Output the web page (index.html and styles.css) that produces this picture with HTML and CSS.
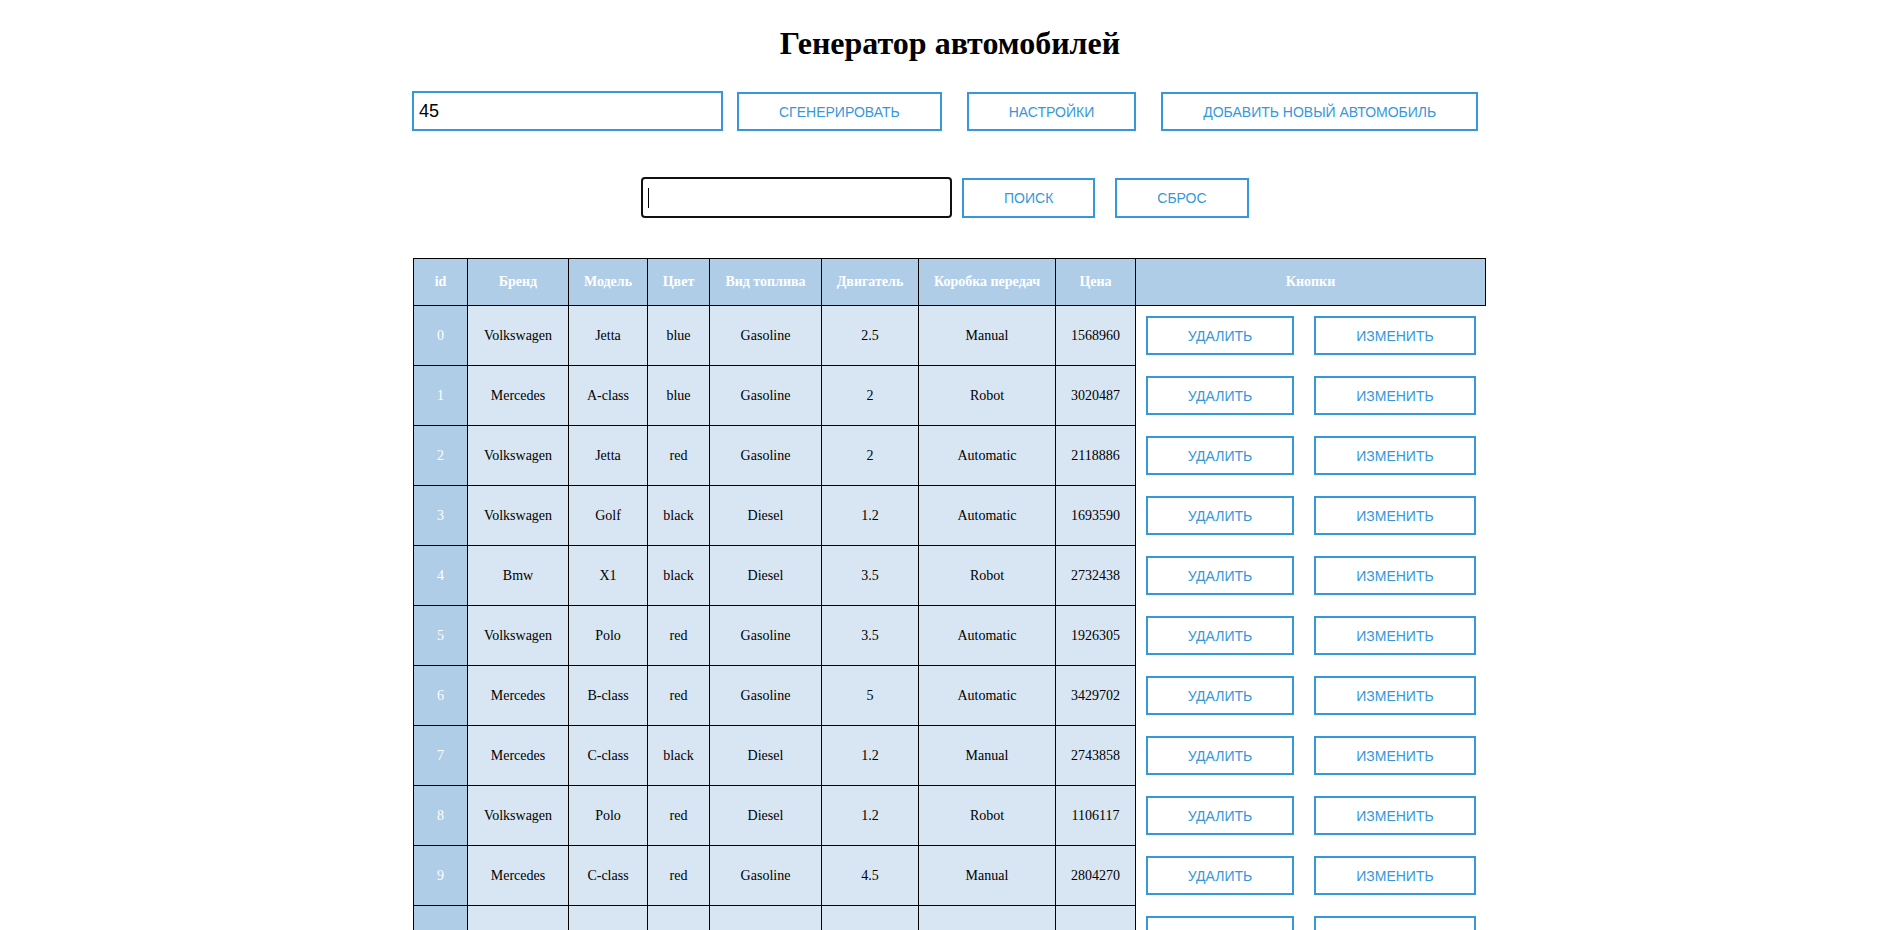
FILE: index.html
```html
<!DOCTYPE html>
<html lang="ru">
<head>
<meta charset="utf-8">
<title>Генератор автомобилей</title>
<link rel="stylesheet" href="styles.css">
</head>
<body>
<h1 class="title">Генератор автомобилей</h1>
<div class="bar bar-gen">
  <input class="field field-count" type="text" value="45">
  <button class="btn btn-first">Сгенерировать</button>
  <button class="btn">Настройки</button>
  <button class="btn">Добавить новый автомобиль</button>
</div>
<div class="bar bar-search">
  <input class="field field-search" type="text" value="">
  <button class="btn btn-first">Поиск</button>
  <button class="btn">Сброс</button>
</div>
<table class="cars">
  <colgroup>
    <col class="c-id"><col class="c-brand"><col class="c-model"><col class="c-color"><col class="c-fuel"><col class="c-engine"><col class="c-gear"><col class="c-price"><col class="c-btns">
  </colgroup>
  <thead>
    <tr><th>id</th><th>Бренд</th><th>Модель</th><th>Цвет</th><th>Вид топлива</th><th>Двигатель</th><th>Коробка передач</th><th>Цена</th><th>Кнопки</th></tr>
  </thead>
  <tbody>
    <tr><td class="id">0</td><td>Volkswagen</td><td>Jetta</td><td>blue</td><td>Gasoline</td><td>2.5</td><td>Manual</td><td>1568960</td><td class="actions"><div class="act"><button class="btn">Удалить</button><button class="btn">Изменить</button></div></td></tr>
    <tr><td class="id">1</td><td>Mercedes</td><td>A-class</td><td>blue</td><td>Gasoline</td><td>2</td><td>Robot</td><td>3020487</td><td class="actions"><div class="act"><button class="btn">Удалить</button><button class="btn">Изменить</button></div></td></tr>
    <tr><td class="id">2</td><td>Volkswagen</td><td>Jetta</td><td>red</td><td>Gasoline</td><td>2</td><td>Automatic</td><td>2118886</td><td class="actions"><div class="act"><button class="btn">Удалить</button><button class="btn">Изменить</button></div></td></tr>
    <tr><td class="id">3</td><td>Volkswagen</td><td>Golf</td><td>black</td><td>Diesel</td><td>1.2</td><td>Automatic</td><td>1693590</td><td class="actions"><div class="act"><button class="btn">Удалить</button><button class="btn">Изменить</button></div></td></tr>
    <tr><td class="id">4</td><td>Bmw</td><td>X1</td><td>black</td><td>Diesel</td><td>3.5</td><td>Robot</td><td>2732438</td><td class="actions"><div class="act"><button class="btn">Удалить</button><button class="btn">Изменить</button></div></td></tr>
    <tr><td class="id">5</td><td>Volkswagen</td><td>Polo</td><td>red</td><td>Gasoline</td><td>3.5</td><td>Automatic</td><td>1926305</td><td class="actions"><div class="act"><button class="btn">Удалить</button><button class="btn">Изменить</button></div></td></tr>
    <tr><td class="id">6</td><td>Mercedes</td><td>B-class</td><td>red</td><td>Gasoline</td><td>5</td><td>Automatic</td><td>3429702</td><td class="actions"><div class="act"><button class="btn">Удалить</button><button class="btn">Изменить</button></div></td></tr>
    <tr><td class="id">7</td><td>Mercedes</td><td>C-class</td><td>black</td><td>Diesel</td><td>1.2</td><td>Manual</td><td>2743858</td><td class="actions"><div class="act"><button class="btn">Удалить</button><button class="btn">Изменить</button></div></td></tr>
    <tr><td class="id">8</td><td>Volkswagen</td><td>Polo</td><td>red</td><td>Diesel</td><td>1.2</td><td>Robot</td><td>1106117</td><td class="actions"><div class="act"><button class="btn">Удалить</button><button class="btn">Изменить</button></div></td></tr>
    <tr><td class="id">9</td><td>Mercedes</td><td>C-class</td><td>red</td><td>Gasoline</td><td>4.5</td><td>Manual</td><td>2804270</td><td class="actions"><div class="act"><button class="btn">Удалить</button><button class="btn">Изменить</button></div></td></tr>
    <tr><td class="id">10</td><td>Bmw</td><td>X3</td><td>blue</td><td>Diesel</td><td>2</td><td>Automatic</td><td>2417305</td><td class="actions"><div class="act"><button class="btn">Удалить</button><button class="btn">Изменить</button></div></td></tr>
    <tr><td class="id">11</td><td>Mercedes</td><td>A-class</td><td>black</td><td>Gasoline</td><td>1.2</td><td>Robot</td><td>1877640</td><td class="actions"><div class="act"><button class="btn">Удалить</button><button class="btn">Изменить</button></div></td></tr>
  </tbody>
</table>
</body>
</html>
```

FILE: styles.css
```css
html, body {
  margin: 0;
  padding: 0;
  background: #ffffff;
}
body {
  font-family: "Liberation Serif", "Times New Roman", serif;
  color: #000000;
  overflow: hidden;
}
.title {
  margin: 25px 0 0;
  padding-right: 4px;
  font-size: 32px;
  font-weight: bold;
  text-align: center;
  line-height: 37px;
}
.bar {
  display: flex;
  align-items: flex-end;
}
.bar-gen {
  margin: 29px 0 0 412px;
  height: 40px;
}
.bar-search {
  margin: 46px 0 0 641px;
  height: 41px;
}
.field {
  box-sizing: border-box;
  width: 311px;
  height: 40px;
  margin: 0;
  padding: 0 5px;
  font-family: "Liberation Sans", Arial, sans-serif;
  font-size: 18px;
  color: #000;
  background: #fff;
  outline: none;
}
.field-count {
  border: 2px solid #3498db;
  align-self: flex-start;
}
.field-search {
  height: 41px;
  width: 311px;
  border: 2px solid #101010;
  border-radius: 4px;
  background: #fff linear-gradient(#000, #000) no-repeat 5px 50% / 1px 20px;
}
.btn {
  box-sizing: border-box;
  height: 39px;
  margin: 0;
  padding: 0 40px;
  border: 2px solid #3498db;
  background: #ffffff;
  color: #3498db;
  font-family: "Liberation Sans", Arial, sans-serif;
  font-size: 14px;
  text-transform: uppercase;
  white-space: nowrap;
  cursor: pointer;
}
.bar-gen .btn {
  margin-left: 25px;
  height: 39px;
}
.bar-gen .btn-first {
  margin-left: 14px;
}
.bar-search .btn {
  margin-left: 20px;
  height: 40px;
}
.bar-search .btn-first {
  margin-left: 10px;
}
.cars {
  margin: 40px 0 0 413px;
  border-collapse: collapse;
  table-layout: fixed;
  width: 1073px;
  font-size: 14px;
}
.c-id { width: 54px; }
.c-brand { width: 101px; }
.c-model { width: 79px; }
.c-color { width: 62px; }
.c-fuel { width: 112px; }
.c-engine { width: 97px; }
.c-gear { width: 137px; }
.c-price { width: 80px; }
.c-btns { width: 350px; }
.cars th {
  height: 46px;
  padding: 0 4px;
  border: 1px solid #000;
  background: #afcde7;
  color: #ffffff;
  font-weight: bold;
  text-align: center;
}
.cars td {
  height: 60px;
  padding: 0 4px;
  border: 1px solid #000;
  background: #d8e6f3;
  text-align: center;
  box-sizing: border-box;
}
.cars td.id {
  background: #afcde7;
  color: #ffffff;
}
.cars td.actions {
  border: none;
  background: #ffffff;
  padding: 0 10px;
}
.act {
  display: flex;
  gap: 20px;
  justify-content: center;
}
```
